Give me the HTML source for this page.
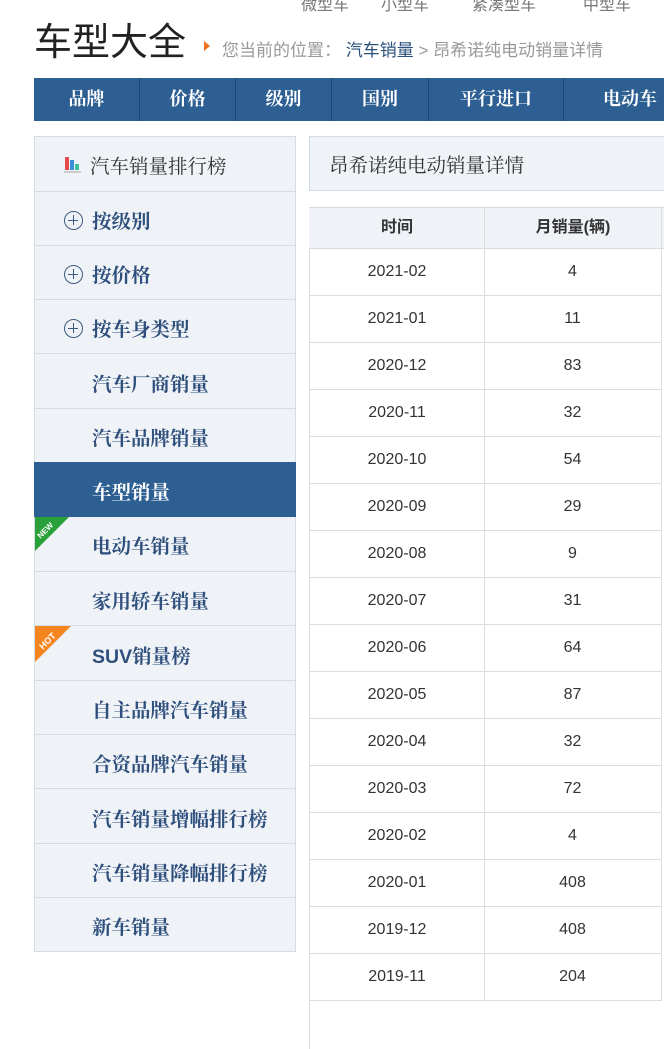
<!DOCTYPE html>
<html><head><meta charset="utf-8"><style>
*{margin:0;padding:0;box-sizing:border-box}
body{width:664px;height:1049px;overflow:hidden;background:#fff;position:relative;font-family:"Liberation Sans","Noto Sans CJK SC",sans-serif}
.a{position:absolute;white-space:nowrap}
.top{top:-9px;font-size:16px;color:#777}
.nav{position:absolute;left:34px;top:78px;width:640px;height:43px;background:#2e5f92}
.nav div{position:absolute;top:0;height:43px;line-height:43px;color:#fff;font-weight:bold;font-size:18px;font-family:"Liberation Serif","Noto Serif CJK SC",serif;text-align:center;border-right:1px solid #1d4672}
.side{position:absolute;left:34px;width:262px;background:#eff3f7;border-left:1px solid #d5dce4;border-right:1px solid #d5dce4;border-top:1px solid #d5dce4;font-family:"Liberation Serif","Noto Serif CJK SC",serif;font-weight:bold;font-size:19.5px;color:#2f4f7c}
.side span{position:absolute;left:57px}
.pl{position:absolute;left:29px;width:19px;height:19px;border:1.5px solid #3f5a80;border-radius:50%}
.pl:before{content:"";position:absolute;left:3px;top:7.5px;width:10px;height:1.5px;background:#3f5a80}
.pl:after{content:"";position:absolute;left:7.5px;top:3px;width:1.5px;height:10px;background:#3f5a80}
.g div{border-bottom:1px solid #dcdcdc}
</style></head><body>
<div class="a top" style="left:301px">微型车</div>
<div class="a top" style="left:381px">小型车</div>
<div class="a top" style="left:472px">紧凑型车</div>
<div class="a top" style="left:583px">中型车</div>
<div class="a" style="left:34px;top:19px;font-size:38px;color:#222;line-height:48px">车型大全</div>
<div class="a" style="left:204px;top:41px;width:0;height:0;border-left:6px solid #f07020;border-top:5px solid transparent;border-bottom:5px solid transparent"></div>
<div class="a" style="left:222px;top:36px;font-size:17px;color:#999">您当前的位置： <span style="color:#2a4f7a">汽车销量</span> &gt; 昂希诺纯电动销量详情</div>
<div class="nav">
<div style="left:0;width:106px">品牌</div>
<div style="left:106px;width:96px">价格</div>
<div style="left:202px;width:96px">级别</div>
<div style="left:298px;width:97px">国别</div>
<div style="left:395px;width:135px">平行进口</div>
<div style="left:530px;width:135px;border:none;text-align:left;padding-left:39px">电动车</div>
</div>
<div class="side" style="top:136px;height:55px">
<div class="a" style="left:30px;top:20px;width:4px;height:13px;background:#e84a4a"></div>
<div class="a" style="left:35px;top:23px;width:4px;height:10px;background:#3a8fd8"></div>
<div class="a" style="left:40px;top:27px;width:4px;height:6px;background:#3cc0a0"></div>
<div class="a" style="left:29px;top:34px;width:17px;height:2px;background:#ccc"></div>
<span style="left:55px;top:14px;font-weight:normal;color:#333">汽车销量排行榜</span></div>
<div class="side" style="top:191px;height:54px"><i class="pl" style="top:19px"></i><span style="top:14px">按级别</span></div>
<div class="side" style="top:245px;height:54px"><i class="pl" style="top:19px"></i><span style="top:14px">按价格</span></div>
<div class="side" style="top:299px;height:54px"><i class="pl" style="top:19px"></i><span style="top:14px">按车身类型</span></div>
<div class="side" style="top:353px;height:55px"><span style="top:15px">汽车厂商销量</span></div>
<div class="side" style="top:408px;height:54px"><span style="top:14px">汽车品牌销量</span></div>
<div class="side" style="top:462px;height:55px;background:#2e5f92;border-color:#2e5f92;color:#fff"><span style="top:14px">车型销量</span></div>
<div class="side" style="top:517px;height:54px;border-top:none"><div class="a" style="left:0;top:0;width:0;height:0;border-top:34px solid #2aa03a;border-right:34px solid transparent"></div><div class="a" style="left:1px;top:9px;font-size:8px;color:#fff;transform:rotate(-45deg);font-family:'Liberation Sans',sans-serif">NEW</div><span style="top:14px">电动车销量</span></div>
<div class="side" style="top:571px;height:54px"><span style="top:14px">家用轿车销量</span></div>
<div class="side" style="top:625px;height:55px"><div class="a" style="left:0;top:0;width:0;height:0;border-top:36px solid #f5861f;border-right:36px solid transparent"></div><div class="a" style="left:3px;top:10px;font-size:9px;color:#fff;transform:rotate(-45deg);font-family:'Liberation Sans',sans-serif">HOT</div><span style="top:15px;font-family:'Liberation Sans','Noto Serif CJK SC',sans-serif">SUV<span style="position:static;font-family:'Liberation Serif','Noto Serif CJK SC',serif">销量榜</span></span></div>
<div class="side" style="top:680px;height:54px"><span style="top:14px">自主品牌汽车销量</span></div>
<div class="side" style="top:734px;height:54px"><span style="top:14px">合资品牌汽车销量</span></div>
<div class="side" style="top:788px;height:55px"><span style="top:15px">汽车销量增幅排行榜</span></div>
<div class="side" style="top:843px;height:54px"><span style="top:14px">汽车销量降幅排行榜</span></div>
<div class="side" style="top:897px;height:55px;border-bottom:1px solid #d5dce4"><span style="top:14px">新车销量</span></div>
<div class="a" style="left:309px;top:136px;width:360px;height:55px;background:#eff3f7;border:1px solid #d5dce4"></div>
<div class="a" style="left:329px;top:150px;font-size:19.5px;color:#333;font-family:'Liberation Serif','Noto Serif CJK SC',serif">昂希诺纯电动销量详情</div>
<div class="a" style="left:309px;top:207px;width:1px;height:842px;background:#dcdcdc"></div>
<div class="a" style="left:309px;top:207px;width:360px;height:42px;background:#eff3f7;border:1px solid #d5dce4;border-left:none"></div>
<div class="a" style="left:484px;top:207px;width:1px;height:794px;background:#dcdcdc"></div>
<div class="a" style="left:661px;top:207px;width:1px;height:794px;background:#dcdcdc"></div>
<div class="a" style="left:310px;top:207px;width:174px;line-height:42px;text-align:center;font-weight:bold;font-size:16px;color:#333">时间</div>
<div class="a" style="left:485px;top:207px;width:176px;line-height:42px;text-align:center;font-weight:bold;font-size:16px;color:#333">月销量(辆)</div>
<div style="position:absolute;left:310px;top:249px;width:351px">
<div class="g" style="display:grid;grid-template-columns:174px 177px;font-size:16px;color:#333;text-align:center;line-height:46px;padding-top:0">
<div>2021-02</div><div>4</div>
<div>2021-01</div><div>11</div>
<div>2020-12</div><div>83</div>
<div>2020-11</div><div>32</div>
<div>2020-10</div><div>54</div>
<div>2020-09</div><div>29</div>
<div>2020-08</div><div>9</div>
<div>2020-07</div><div>31</div>
<div>2020-06</div><div>64</div>
<div>2020-05</div><div>87</div>
<div>2020-04</div><div>32</div>
<div>2020-03</div><div>72</div>
<div>2020-02</div><div>4</div>
<div>2020-01</div><div>408</div>
<div>2019-12</div><div>408</div>
<div>2019-11</div><div>204</div>
</div></div>
</body></html>
